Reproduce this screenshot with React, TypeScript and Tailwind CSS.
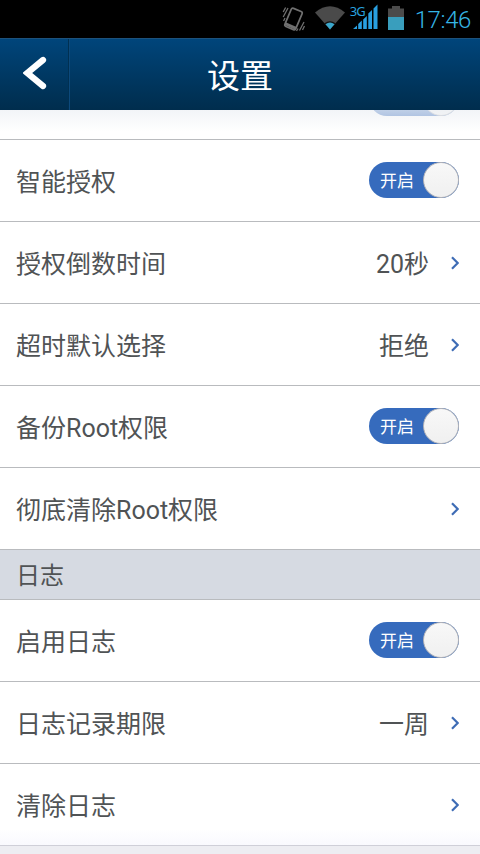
type RowProps = {
  label: string;
  value?: string;
  toggle?: boolean;
  last?: boolean;
};

function Toggle({ text = "开启" }: { text?: string }) {
  return (
    <div className="mb-[2px] flex h-9 w-[90px] items-center justify-between rounded-full bg-[#366bbd] pl-[11px]">
      <span className="pt-[3px] text-[17px] leading-none text-white">{text}</span>
      <span className="size-9 rounded-full border border-[#b4b4b8] bg-linear-to-b from-[#f8f8f8] to-[#f0f0f0]" />
    </div>
  );
}

function Arrow() {
  return (
    <svg className="ml-[22px] mr-px h-[14px] w-2" viewBox="0 0 8 14" fill="none" stroke="#3e6cb5" strokeWidth="2.2">
      <path d="M1 1.3L6.7 7L1 12.7" />
    </svg>
  );
}

function Row({ label, value, toggle, last }: RowProps) {
  return (
    <div
      className={`flex h-[82px] shrink-0 items-center border-b pl-4 text-[25px] leading-none ${
        last ? "border-[#cfcfd8] bg-linear-to-b from-white from-80% to-[#f9f9fe]" : "border-[#b9bbbe]"
      } ${toggle ? "pr-[21px]" : "pr-5"}`}
    >
      <span className="grow pt-[3px]">{label}</span>
      {value && <span className="pt-[3px]">{value}</span>}
      {toggle ? <Toggle /> : <Arrow />}
    </div>
  );
}

function StatusBar() {
  return (
    <div className="flex h-[38px] shrink-0 items-center justify-end bg-black pr-[9px]">
      {/* Vibrate */}
      <svg className="mr-[9px] h-[30px] w-6" viewBox="0 0 24 30" fill="none" stroke="#707070" strokeWidth="1.3">
        <g transform="rotate(23 11.5 15)">
          <rect x="5.6" y="5.2" width="11.8" height="19.6" rx="1.8" strokeWidth="1.7" />
          <path d="M5.6 22.6H17.4" strokeWidth="3" />
        </g>
        <path d="M1.2 8L3.6 3.5M1.2 13L6 4M1.6 17L3 14M14.5 27L16 24.5M17.5 26.5L22 18M20.5 26L22.5 22" />
      </svg>
      {/* Wifi */}
      <svg className="mr-[5px] h-[30px] w-[30px]" viewBox="0 0 30 30">
        <path d="M0 8.5Q15 -4 30 8.5L15 25.5Z" fill="#4a4a4a" />
        <path d="M9.4 19.2Q15 15.2 20.6 19.2L15 25.5Z" fill="#111" />
        <path d="M10.5 20.2Q15 16.8 19.5 20.2L15 25.5Z" fill="#3ba7cc" />
      </svg>
      {/* Signal */}
      <div className="relative mr-[10px] h-[30px] w-7">
        <svg className="h-[30px] w-7" viewBox="0 0 28 30" fill="#299fe0">
          <path d="M3 25L7 21.5V25ZM8.2 25V20L11.8 16.5V25ZM13.2 25V15.5L16.8 12V25ZM18.3 25V9.5L22 6V25ZM23.5 25V4.5L27.5 0.5V25Z" />
        </svg>
        <span className="absolute left-0 top-px text-[13px] leading-none tracking-[-0.8px] text-[#29a0df] font-['Noto_Sans']">3G</span>
      </div>
      {/* Battery */}
      <svg className="mr-[11px] h-[30px] w-4" viewBox="0 0 16 30">
        <path d="M0 4.5H4V2H12V4.5H16V14H0Z" fill="#4b4b4b" />
        <path d="M0 13H16V26H0Z" fill="#399ebd" />
      </svg>
      <span className="pt-[2px] text-[24px] leading-none font-light tracking-[-0.4px] text-[#35b5e5]">17:46</span>
    </div>
  );
}

export default function App() {
  return (
    <div className="flex h-[854px] w-[480px] flex-col overflow-hidden bg-white font-[Roboto,'Noto_Sans_CJK_SC',sans-serif] text-[#505355]">
      <StatusBar />

      {/* Title bar */}
      <header className="grid h-[72px] shrink-0 grid-cols-[69px_1fr_69px] border-t border-[#1d527d] bg-linear-to-b from-[#00457b] to-[#002d4d]">
        <div className="flex items-center border-r border-[#003052] pb-[3px] pl-[23px] shadow-[1px_0_0_#0c497b]">
          <svg className="h-[34px] w-6" viewBox="0 0 24 34" fill="none" stroke="white" strokeWidth="6.2" strokeLinecap="round">
            <path d="M20 4L4.2 17L20 30" />
          </svg>
        </div>
        <h1 className="flex items-center justify-center pt-[4px] text-[33px] leading-none text-white">设置</h1>
      </header>

      {/* Settings list, scrolled part way */}
      <main className="relative flex grow flex-col overflow-hidden bg-[#ededf2]">
        <div className="flex flex-col bg-white">
          {/* Lower edge of the row under the title bar */}
          <div className="flex h-[30px] shrink-0 items-start justify-end overflow-hidden border-b border-[#b9bbbe] pr-[21px]">
            <div className="-mt-[30px]">
              <Toggle text="" />
            </div>
          </div>
          <Row label="智能授权" toggle />
          <Row label="授权倒数时间" value="20秒" />
          <Row label="超时默认选择" value="拒绝" />
          <Row label="备份Root权限" toggle />
          <Row label="彻底清除Root权限" />
          <h2 className="flex h-[50px] shrink-0 items-center border-b border-[#b9bbbe] bg-[#d6dae2] pl-4 pt-[2px] text-[24px] leading-none">
            日志
          </h2>
          <Row label="启用日志" toggle />
          <Row label="日志记录期限" value="一周" />
          <Row label="清除日志" last />
        </div>
        <div className="absolute inset-x-0 top-0 h-[22px] bg-linear-to-b from-[#eef1f5]/75 to-white/40" />
      </main>
    </div>
  );
}
